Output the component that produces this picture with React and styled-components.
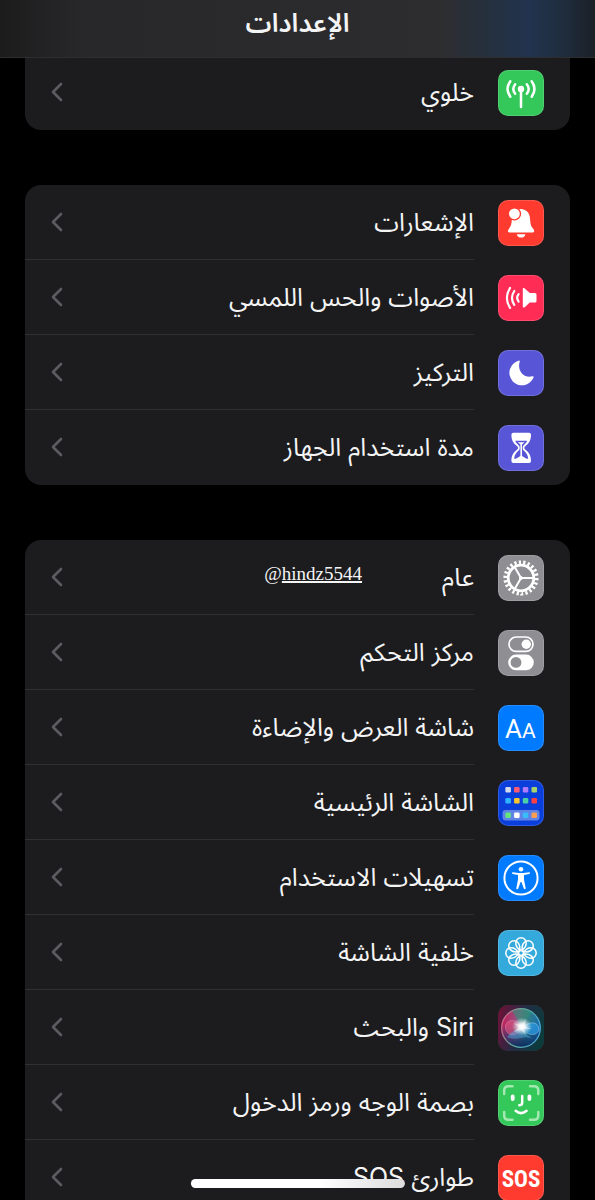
import React from "react";
import styled, { createGlobalStyle } from "styled-components";

const GlobalStyle = createGlobalStyle`
  * { box-sizing: border-box; }
  body {
    margin: 0;
    background: #000;
    color: #f4f4f5;
    font-family: Inter, "Noto Sans Arabic", "DejaVu Sans", sans-serif;
  }
`;

const Screen = styled.div`
  position: relative;
  height: 100vh;
  overflow: hidden;
`;

const TopBar = styled.header`
  position: absolute;
  inset: 0 0 auto 0;
  z-index: 1;
  height: 58px;
  padding-bottom: 12px;
  display: flex;
  align-items: center;
  justify-content: center;
  border-bottom: 1px solid #2e2e30;
  background: linear-gradient(
    to right,
    #1c1c1d 0%,
    #28282a 14%,
    #2a2a2c 45%,
    #2d2d2f 74%,
    #26303c 81%,
    #21334e 89%,
    #1f2c3c 95%,
    #1b2027 100%
  );
`;

const Title = styled.h1`
  margin: 0;
  font-size: 26px;
  line-height: 32px;
  font-weight: 600;
`;

const Content = styled.main`
  height: 100%;
  overflow-y: auto;
  scrollbar-width: none;
  padding: 55px 25px 0;
  display: flex;
  flex-direction: column;
  gap: 55px;
`;

const Group = styled.ul`
  flex: none;
  margin: 0;
  padding: 0;
  list-style: none;
  overflow: hidden;
  background: #1c1c1e;
  border-radius: ${(p) => (p.$continued ? "0 0 16px 16px" : "16px")};
`;

const Row = styled.a`
  display: flex;
  align-items: center;
  gap: 24px;
  height: 75px;
  padding-right: 26px;
  color: inherit;
  text-decoration: none;
`;

const Tile = styled.svg`
  flex: none;
  width: 46px;
  height: 46px;
  direction: ltr;
  border-radius: 10px;
  background: ${(p) => p.$color};
  box-shadow: inset 0 0 0 1px rgba(255, 255, 255, 0.15);
`;

const RowBody = styled.span`
  flex: 1;
  align-self: stretch;
  display: flex;
  align-items: center;
  padding-left: 25px;
  border-bottom: 1px solid ${(p) => (p.$last ? "transparent" : "#303033")};
`;

const Label = styled.span`
  font-size: 25px;
  line-height: 32px;
  white-space: nowrap;
`;

const Handle = styled.span`
  margin-right: 80px;
  padding-bottom: 6px;
  font-family: "Liberation Serif", serif;
  font-size: 19px;
  line-height: 24px;

  u {
    text-decoration-thickness: 2px;
  }
`;

const Chevron = styled.svg`
  flex: none;
  width: 14px;
  height: 20px;
  margin-right: auto;
`;

const HomeIndicator = styled.div`
  position: absolute;
  z-index: 1;
  bottom: 12px;
  left: 50%;
  width: 36%;
  height: 9px;
  border-radius: 5px;
  transform: translateX(-50%);
  background: linear-gradient(to right, #fff 60%, #dcdcdc);
`;

const white = { fill: "none", stroke: "#fff", strokeLinecap: "round", strokeLinejoin: "round" };

const Cellular = () => (
  <>
    <circle cx="23" cy="19" r="3.2" fill="#fff" />
    <g {...white} strokeWidth="2.5">
      <path d="M23 20V37" />
      <path d="M17.2 14.2Q13.4 19 17.2 23.8M28.8 14.2Q32.6 19 28.8 23.8" />
      <path d="M12.3 11.3Q6.7 19 12.3 26.7M33.7 11.3Q39.3 19 33.7 26.7" />
    </g>
  </>
);

const Bell = () => (
  <>
    <path
      d="M22.5 9C28 9 31.5 12.8 32 18C32.4 24.5 33 26.2 35.2 28.8C37 31 36.2 32.5 34.4 32.5H11.6C9.8 32.5 9.2 31 10.8 28.9C13.2 26 13.6 24 13.8 19C14 13 17 9 22.5 9Z"
      fill="#fff"
    />
    <path d="M18.8 34.2H27.4C27 36.3 25.4 37.6 23.1 37.6S19.2 36.3 18.8 34.2Z" fill="#fff" />
    <circle cx="16.4" cy="13.8" r="6.8" fill="#ff3b30" />
    <circle cx="16.4" cy="13.8" r="5.4" fill="#fff" />
  </>
);

const Speaker = () => (
  <>
    <path
      d="M24.8 14.2C24.8 13 25.9 12.7 26.7 13.5L31.8 18H37Q38.5 18 38.5 19.5V26Q38.5 27.5 37 27.5H31.8L26.7 32.2C25.9 33 24.8 32.6 24.8 31.5Z"
      fill="#fff"
    />
    <g {...white} strokeWidth="2.2">
      <path d="M20.6 19.2Q17.8 22.9 20.6 26.6" />
      <path d="M16.3 16Q11.7 22.9 16.3 29.8" />
      <path d="M12 13Q5.8 22.9 12 32.8" />
    </g>
  </>
);

const Moon = () => (
  <path
    d="M20.5 10.8A12.5 12.5 0 1 0 35.5 27.5C36 26.3 35.2 26 34.4 26.3C26.5 28.8 18.8 21 21.7 11.7C22 10.7 21.3 10.3 20.5 10.8Z"
    fill="#fff"
  />
);

const Hourglass = () => (
  <>
    <path
      d="M15.4 7.7H31Q33 7.7 33 9.7C33 15.5 31 18 27.3 21.2C26 22.4 26 23.4 27.3 24.6C31 27.8 33 30.3 33 36.1Q33 38.1 31 38.1H15.4Q13.4 38.1 13.4 36.1C13.4 30.3 15.4 27.8 19.1 24.6C20.4 23.4 20.4 22.4 19.1 21.2C15.4 18 13.4 15.5 13.4 9.7Q13.4 7.7 15.4 7.7Z"
      fill="#fff"
    />
    <path
      d="M17.2 15.8H29.2C28.5 18 26.5 19.3 25 21C24.5 22.3 24.5 23.5 25 24.8C27.5 27.2 30 29.5 30.2 33.8H16.2C16.4 29.5 18.9 27.2 21.4 24.8C21.9 23.5 21.9 22.3 21.4 21C19.9 19.3 17.9 18 17.2 15.8Z"
      fill="#5856d6"
    />
    <path d="M19.8 17.2H26.6L24 19.5V31L28.8 34H17.6L22.4 31V19.500Z" fill="#fff" />
  </>
);

const Gear = () => (
  <g fill="none" stroke="#fff">
    <circle cx="23" cy="23" r="15.8" strokeWidth="3.6" pathLength="44" strokeDasharray="1 1" />
    <circle cx="23" cy="23" r="12.8" strokeWidth="2.8" />
    <path d="M23 23H36M23 23L16.5 11.7M23 23L16.5 34.3" strokeWidth="2" />
    <circle cx="23" cy="23" r="1.5" fill="#fff" />
  </g>
);

const Switches = () => (
  <>
    <rect x="11" y="7" width="24" height="14.4" rx="7.2" fill="none" stroke="#fff" strokeWidth="1.7" />
    <circle cx="28.3" cy="14.2" r="4.7" fill="#fff" />
    <rect x="10.2" y="24.6" width="25.6" height="15.6" rx="7.8" fill="#fff" />
    <circle cx="18" cy="32.4" r="5.4" fill="#8e8e93" />
  </>
);

const TextSize = () => (
  <g fill="#fff" fontFamily="Roboto, sans-serif">
    <text x="7" y="33" fontSize="26">A</text>
    <text x="24" y="33" fontSize="21">A</text>
  </g>
);

const appColors = [
  ["#d3dcec", "#fb5a74", "#b07aff", "#a8d36a"],
  ["#2fb4ff", "#ffc62e", "#4bd0a8", "#ff4040"],
  ["#63e77c", "#ffffff", "#38bdf8", "#ff9f52"],
];

const HomeGrid = () => (
  <>
    <rect x="4.5" y="30" width="37" height="10.6" rx="3" fill="#5f83e6" />
    {appColors.map((line, r) =>
      line.map((c, i) => (
        <rect key={`${r}-${i}`} x={7.4 + i * 8.7} y={[7, 18, 32.5][r]} width="5.5" height="5.5" rx="1.2" fill={c} />
      ))
    )}
  </>
);

const Accessibility = () => (
  <>
    <circle cx="23" cy="23" r="16.6" fill="none" stroke="#fff" strokeWidth="2" />
    <circle cx="23" cy="14.2" r="2.3" fill="#fff" />
    <path
      d="M14.8 17.3L20.5 18H25.5L31.2 17.3Q32 17.3 32 18Q32 18.7 31.3 18.9L26 20V24.5L27.7 33.2Q27.7 34.2 26.9 34.3Q26.1 34.3 25.8 33.5L23.4 27H22.6L20.2 33.5Q19.9 34.3 19.1 34.3Q18.3 34.2 18.3 33.2L20 24.5V20L14.7 18.9Q14 18.7 14 18Q14 17.3 14.8 17.3Z"
      fill="#fff"
    />
  </>
);

const Flower = () => (
  <g fill="none" stroke="#fff" strokeWidth="1.5">
    {[0, 45, 90, 135, 180, 225, 270, 315].map((a) => (
      <path
        key={a}
        transform={`rotate(${a} 23 23)`}
        d="M23 20.5C19.5 18.8 17.8 16 17.8 13A5.200 5.200 0 0 1 28.200 13C28.200 16 26.500 18.800 23 20.500Z"
      />
    ))}
    <circle cx="23" cy="23" r="2.5" />
  </g>
);

const SiriOrb = () => (
  <>
    <defs>
      <linearGradient id="siriTile" x1="0" y1="0.2" x2="1" y2="0.5">
        <stop offset="0" stopColor="#6d1238" />
        <stop offset="0.5" stopColor="#232b45" />
        <stop offset="1" stopColor="#0c3b3c" />
      </linearGradient>
      <linearGradient id="siriOrb" x1="0" y1="0.4" x2="1" y2="0.6">
        <stop offset="0" stopColor="#c41f5b" />
        <stop offset="0.4" stopColor="#8c5a86" />
        <stop offset="0.65" stopColor="#2f7d86" />
        <stop offset="1" stopColor="#1668b8" />
      </linearGradient>
      <linearGradient id="siriDepth" x1="0" y1="0" x2="0" y2="1">
        <stop offset="0.4" stopColor="#0b2a5e" stopOpacity="0" />
        <stop offset="0.95" stopColor="#0b2a5e" stopOpacity="0.9" />
      </linearGradient>
      <linearGradient id="siriRim" x1="0" y1="0" x2="1" y2="0.3">
        <stop offset="0" stopColor="#f0648f" />
        <stop offset="0.5" stopColor="#62b79f" />
        <stop offset="1" stopColor="#55b4dc" />
      </linearGradient>
      <radialGradient id="siriGlow">
        <stop offset="0" stopColor="#fff" />
        <stop offset="0.3" stopColor="#fff" stopOpacity="0.9" />
        <stop offset="1" stopColor="#bff0ee" stopOpacity="0" />
      </radialGradient>
    </defs>
    <rect width="46" height="46" rx="10" fill="url(#siriTile)" />
    <circle cx="23" cy="23" r="19.5" fill="url(#siriOrb)" />
    <path d="M24 21L14 6Q23 1 34 7Z" fill="#2b9277" opacity="0.6" />
    <circle cx="23" cy="23" r="19.5" fill="url(#siriDepth)" />
    <path d="M24 23C19 13 9 14 7.5 21C7 30 17 34 24 23Z" fill="#e6537f" stroke="#f4a0bd" strokeWidth="0.8" opacity="0.55" />
    <path d="M24 23C30 32 40 31 41 24C40 16 31 16 24 23Z" fill="#2c9be6" stroke="#8fd4f5" strokeWidth="0.8" opacity="0.7" />
    <path d="M9 32Q16 24 24 22.500Q29 31 37 35Q31 31 23 33T9 32Z" fill="#4db4e8" opacity="0.45" />
    <circle cx="23" cy="23" r="19.3" fill="none" stroke="url(#siriRim)" strokeWidth="1.3" opacity="0.85" />
    <ellipse cx="24" cy="21.5" rx="10" ry="9" fill="url(#siriGlow)" />
    <path d="M15 18L23 20L28 14L26.5 21L34 24L26 24L28 30L23 25L16 27L21 22Z" fill="#fff" opacity="0.4" />
  </>
);

const FaceId = () => (
  <>
    <path
      d="M6.2 14V10.5Q6.2 6.2 10.5 6.2H14.5M32 6.2H36Q40.3 6.2 40.3 10.5V14M40.3 32V35.5Q40.3 39.8 36 39.8H32M14.5 39.8H10.5Q6.2 39.8 6.2 35.5V32"
      {...white}
      stroke="#a2e8b0"
      strokeWidth="2.5"
    />
    <g {...white}>
      <path d="M14.7 16.3V19M31.4 16.3V19" strokeWidth="3.8" />
      <path d="M24.2 16V22.8Q24.2 25.3 21.3 25.3M17.6 30.8Q23 35.4 28.6 30.8" strokeWidth="2.5" />
    </g>
  </>
);

const Sos = () => (
  <text
    x="23"
    y="32"
    textAnchor="middle"
    fill="#fff"
    fontFamily='"Liberation Sans Narrow", "Roboto Condensed", Roboto, sans-serif'
    fontWeight="700"
    fontSize="23"
  >
    SOS
  </text>
);

const groups = [
  {
    continued: true,
    rows: [{ label: "خلوي", color: "#34c759", Icon: Cellular }],
  },
  {
    rows: [
      { label: "الإشعارات", color: "#ff3b30", Icon: Bell },
      { label: "الأصوات والحس اللمسي", color: "#ff2d55", Icon: Speaker },
      { label: "التركيز", color: "#5856d6", Icon: Moon },
      { label: "مدة استخدام الجهاز", color: "#5856d6", Icon: Hourglass },
    ],
  },
  {
    rows: [
      { label: "عام", color: "#8e8e93", Icon: Gear, handle: "hindz5544" },
      { label: "مركز التحكم", color: "#8e8e93", Icon: Switches },
      { label: "شاشة العرض والإضاءة", color: "#007aff", Icon: TextSize },
      { label: "الشاشة الرئيسية", color: "#0a3fdc", Icon: HomeGrid },
      { label: "تسهيلات الاستخدام", color: "#007aff", Icon: Accessibility },
      { label: "خلفية الشاشة", color: "#34aadc", Icon: Flower },
      { label: "Siri والبحث", color: "#1c1c1e", Icon: SiriOrb },
      { label: "بصمة الوجه ورمز الدخول", color: "#34c759", Icon: FaceId },
      { label: "طوارئ SOS", color: "#ff3b30", Icon: Sos },
    ],
  },
];

function SettingsRow({ label, color, Icon, handle, last }) {
  return (
    <li>
      <Row href="#">
        <Tile viewBox="0 0 46 46" $color={color} aria-hidden="true">
          <Icon />
        </Tile>
        <RowBody $last={last}>
          <Label>{label}</Label>
          {handle && (
            <Handle dir="ltr">
              @<u>{handle}</u>
            </Handle>
          )}
          <Chevron viewBox="0 0 14 20" aria-hidden="true">
            <path d="M11 2L3 10L11 18" fill="none" stroke="#5c5c60" strokeWidth="2.6" strokeLinecap="round" strokeLinejoin="round" />
          </Chevron>
        </RowBody>
      </Row>
    </li>
  );
}

export default function App() {
  return (
    <Screen dir="rtl" lang="ar">
      <GlobalStyle />
      <TopBar>
        <Title>الإعدادات</Title>
      </TopBar>
      <Content>
        {groups.map((group, g) => (
          <Group key={g} $continued={group.continued}>
            {group.rows.map((row, i) => (
              <SettingsRow key={row.label} {...row} last={i === group.rows.length - 1} />
            ))}
          </Group>
        ))}
      </Content>
      <HomeIndicator />
    </Screen>
  );
}
